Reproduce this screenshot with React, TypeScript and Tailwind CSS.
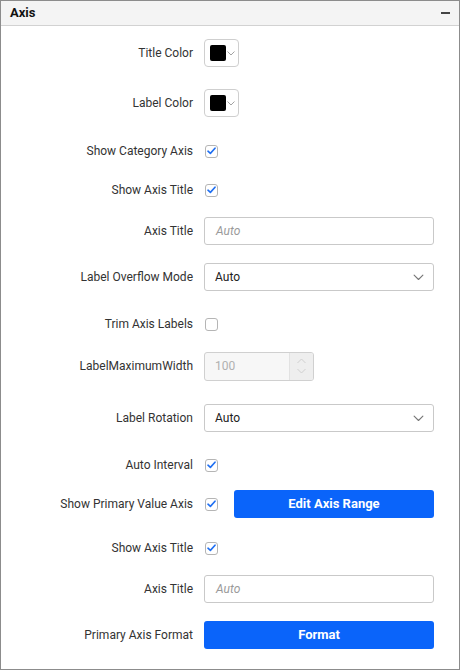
import React from "react";

const font = { fontFamily: "Roboto, 'Liberation Sans', sans-serif" };

function Check({ checked = true }: { checked?: boolean }) {
  return (
    <span className="flex items-center justify-center w-[13px] h-[13px] ml-[1px] border border-[#b5b5b5] rounded-[3px] bg-white">
      {checked && (
        <svg width="9" height="8" viewBox="0 0 9 8" fill="none">
          <path d="M1 4.2 L3.4 6.4 L8 1.2" stroke="#1f6ff2" strokeWidth="1.6" strokeLinecap="round" strokeLinejoin="round" />
        </svg>
      )}
    </span>
  );
}

function Chevron({ color = "#777", size = 11 }: { color?: string; size?: number }) {
  return (
    <svg width={size} height={size * 0.6} viewBox="0 0 10 6" fill="none">
      <path d="M1 1 L5 5 L9 1" stroke={color} strokeWidth="1" strokeLinecap="round" strokeLinejoin="round" />
    </svg>
  );
}

function ColorBox() {
  return (
    <div className="flex items-center w-[35px] h-[28px] border border-[#cfcfcf] rounded-[4px] bg-white pl-[5px] gap-[1px]">
      <span className="w-[16px] h-[16px] bg-black rounded-[2px]" />
      <Chevron color="#8a8a8a" size={8} />
    </div>
  );
}

function Select() {
  return (
    <div className="flex items-center justify-between w-[230px] h-[28px] border border-[#c9c9c9] rounded-[3px] bg-white pl-[10px] pr-[9px] text-[12px] text-[#222]">
      <span>Auto</span>
      <Chevron color="#777" size={11} />
    </div>
  );
}

function TextInput() {
  return (
    <div className="flex items-center w-[230px] h-[28px] border border-[#c9c9c9] rounded-[3px] bg-white pl-[11px] text-[12px] italic text-[#9a9a9a]">
      Auto
    </div>
  );
}

function NumberInput() {
  return (
    <div className="flex items-stretch w-[110px] h-[29px] border border-[#d0d0d0] rounded-[3px] bg-[#f7f7f7] overflow-hidden">
      <span className="flex-1 flex items-center pl-[10px] text-[12px] text-[#b0b0b0]">100</span>
      <span className="w-[24px] flex flex-col items-center justify-center gap-[4px] bg-[#eeeeee] border-l border-[#e2e2e2]">
        <svg width="11" height="6" viewBox="0 0 10 6" fill="none">
          <path d="M1 5 L5 1 L9 5" stroke="#cfcfcf" strokeWidth="1" />
        </svg>
        <svg width="11" height="6" viewBox="0 0 10 6" fill="none">
          <path d="M1 1 L5 5 L9 1" stroke="#cfcfcf" strokeWidth="1" />
        </svg>
      </span>
    </div>
  );
}

function Button({ label, w }: { label: string; w: string }) {
  return (
    <button className={`${w} h-[28px] rounded-[3px] bg-[#0a64fa] text-white text-[13px] font-bold flex items-center justify-center`}>
      {label}
    </button>
  );
}

function Row({ label, mt, children }: { label: string; mt: string; children: React.ReactNode }) {
  return (
    <div className={`flex items-center h-[28px] ${mt}`}>
      <div className="w-[192px] text-right text-[12px] text-[#333]">{label}</div>
      <div className="ml-[11px] flex items-center">{children}</div>
    </div>
  );
}

export default function App() {
  return (
    <div style={font} className="w-[460px] h-[670px] border border-[#8c8c8c] bg-white flex flex-col">
      {/* Header */}
      <div className="h-[25px] flex items-center justify-between bg-[#f4f4f4] border-b border-[#d2d2d2] pl-[9px] pr-[9px]">
        <span className="text-[13px] font-bold text-[#111]">Axis</span>
        <span className="w-[9px] h-[2px] bg-[#444]" />
      </div>

      <Row label="Title Color" mt="mt-[13px]">
        <ColorBox />
      </Row>
      <Row label="Label Color" mt="mt-[22px]">
        <ColorBox />
      </Row>
      <Row label="Show Category Axis" mt="mt-[20px]">
        <Check />
      </Row>
      <Row label="Show Axis Title" mt="mt-[11px]">
        <Check />
      </Row>
      <Row label="Axis Title" mt="mt-[13px]">
        <TextInput />
      </Row>
      <Row label="Label Overflow Mode" mt="mt-[18px]">
        <Select />
      </Row>
      <Row label="Trim Axis Labels" mt="mt-[19px]">
        <Check checked={false} />
      </Row>
      <Row label="LabelMaximumWidth" mt="mt-[14px]">
        <NumberInput />
      </Row>
      <Row label="Label Rotation" mt="mt-[24px]">
        <Select />
      </Row>
      <Row label="Auto Interval" mt="mt-[19px]">
        <Check />
      </Row>
      <Row label="Show Primary Value Axis" mt="mt-[11px]">
        <Check />
        <span className="ml-[16px]">
          <Button label="Edit Axis Range" w="w-[200px]" />
        </span>
      </Row>
      <Row label="Show Axis Title" mt="mt-[16px]">
        <Check />
      </Row>
      <Row label="Axis Title" mt="mt-[13px]">
        <TextInput />
      </Row>
      <Row label="Primary Axis Format" mt="mt-[18px]">
        <Button label="Format" w="w-[230px]" />
      </Row>
    </div>
  );
}
